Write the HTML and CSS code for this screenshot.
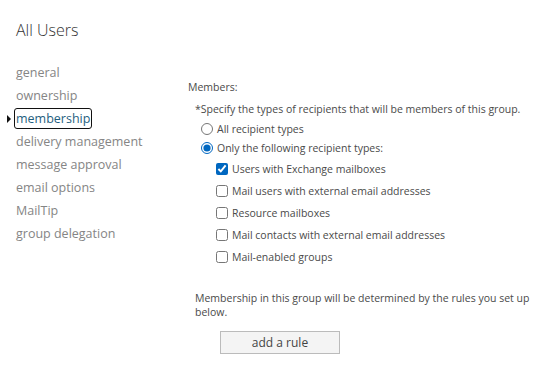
FILE: index.html
```html
<!DOCTYPE html>
<html>
<head>
  <title>All Users</title>
  <link rel="stylesheet" href="styles.css">
</head>
<body>

<div class="page">
  <div class="sidebar">
    <h1 class="title">All Users</h1>
    <a href="#" class="navlink">general</a>
    <a href="#" class="navlink">ownership</a>
    <a href="#" class="navlink current">membership</a>
    <a href="#" class="navlink">delivery management</a>
    <a href="#" class="navlink">message approval</a>
    <a href="#" class="navlink">email options</a>
    <a href="#" class="navlink">MailTip</a>
    <a href="#" class="navlink">group delegation</a>
  </div>

  <div class="main">
    <div class="label">Members:</div>
    <div class="hint">*Specify the types of recipients that will be members of this group.</div>

    <label class="option radio"><input type="radio" name="rtype"> All recipient types</label>
    <label class="option radio"><input type="radio" name="rtype" checked> Only the following recipient types:</label>

    <div class="types">
      <label class="option"><input type="checkbox" checked> Users with Exchange mailboxes</label>
      <label class="option"><input type="checkbox"> Mail users with external email addresses</label>
      <label class="option"><input type="checkbox"> Resource mailboxes</label>
      <label class="option"><input type="checkbox"> Mail contacts with external email addresses</label>
      <label class="option"><input type="checkbox"> Mail-enabled groups</label>
    </div>

    <p class="rules">Membership in this group will be determined by the rules you set up below.</p>
    <button class="addrule">add a rule</button>
  </div>
</div>

</body>
</html>
```

FILE: styles.css
```css
body {
  margin: 0;
  background: #fff;
  font-family: 'Open Sans', 'Noto Sans', sans-serif;
  color: #444;
}

.page {
  display: flex;
}

.sidebar {
  width: 173px;
  padding: 18px 0 0 16px;
  display: flex;
  flex-direction: column;
  align-items: flex-start;
}

.title {
  margin: 0 0 19px 0;
  font-size: 16px;
  font-weight: 300;
  color: #333;
  line-height: 24px;
}

.navlink {
  font-size: 12.5px;
  line-height: 23px;
  color: #858585;
  text-decoration: none;
}

.navlink.current {
  position: relative;
  color: #1f5f7f;
  outline: 1.5px solid #111;
  border-radius: 2px;
  margin-left: -1px;
  padding: 0 1px;
  line-height: 19px;
  margin-top: 2px;
  margin-bottom: 2px;
}

.navlink.current::before {
  content: "";
  position: absolute;
  left: -8px;
  top: 6px;
  border-left: 4px solid #111;
  border-top: 4px solid transparent;
  border-bottom: 4px solid transparent;
}

.main {
  padding-top: 79px;
  font-size: 10.5px;
  color: #4a4a4a;
}

.label {
  line-height: 16px;
}

.hint {
  margin: 6px 0 2px 7px;
  line-height: 16px;
}

.option {
  display: flex;
  align-items: center;
  height: 19px;
  margin-left: 12px;
}

.option input {
  margin: 0 4px 0 1px;
  width: 12px;
  height: 12px;
  accent-color: #0067c0;
}

.types {
  margin-top: 1px;
  margin-left: 15px;
}

.types .option {
  height: 22px;
}

.rules {
  margin: 23px 0 0 7px;
  width: 345px;
  line-height: 14px;
}

.addrule {
  margin: 12px 0 0 32px;
  width: 120px;
  height: 23px;
  border: 1px solid #bbb;
  background: #f4f4f4;
  font-family: inherit;
  font-size: 12px;
  color: #444;
}
```
